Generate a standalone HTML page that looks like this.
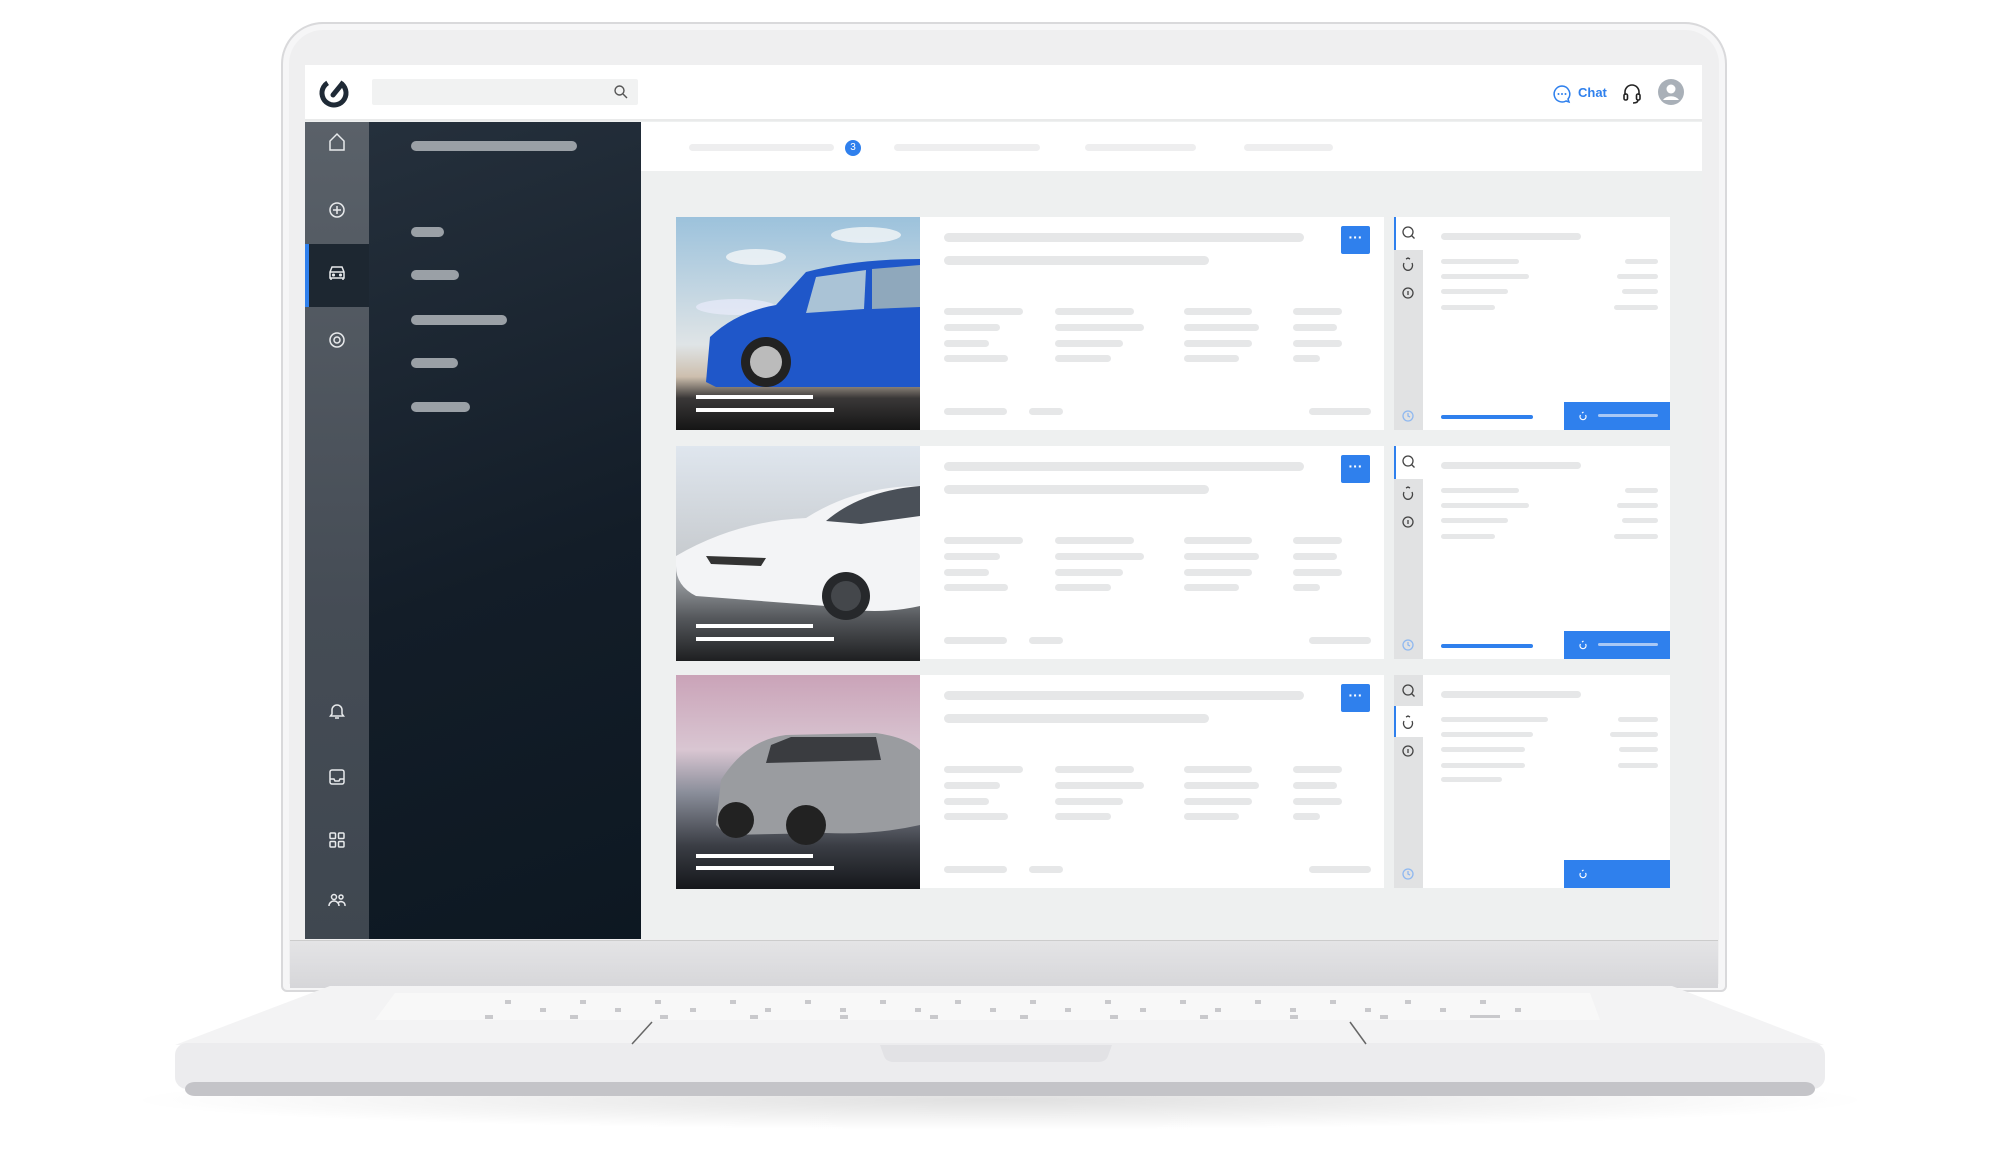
<!DOCTYPE html>
<html><head><meta charset="utf-8"><style>
*{margin:0;padding:0;box-sizing:border-box}
body{width:2000px;height:1152px;background:#fff;position:relative;overflow:hidden;font-family:"Liberation Sans",sans-serif}
.a{position:absolute}
.b{position:absolute;background:#e6e7e8;border-radius:5px;height:7px}
.m{position:absolute;background:#9aa0a6;border-radius:6px;height:10px}
.row{position:absolute;left:676px;width:994px;height:213px}
.mid{position:absolute;left:244px;top:0;width:464px;height:213px;background:#fff}
.strip{position:absolute;left:718px;top:0;width:29px;height:213px;background:#e1e2e3}
.rw{position:absolute;left:747px;top:0;width:247px;height:213px;background:#fff}
.btn{position:absolute;left:665px;top:9px;width:29px;height:28px;background:#2f80ed;border-radius:2px;color:#fff;font-size:14px;text-align:center;line-height:22px;font-weight:bold}
.bb{position:absolute;left:888px;top:185px;width:106px;height:28px;background:#2f80ed}
</style></head><body>
<div class="a" style="left:120px;top:1070px;width:1760px;height:60px;border-radius:50%;background:radial-gradient(ellipse at center,rgba(0,0,0,.12),rgba(0,0,0,0) 70%)"></div>
<div class="a" style="left:281px;top:22px;width:1446px;height:970px;border-radius:42px 42px 6px 6px;background:#efeff0;border:2px solid #d9d9db;box-shadow:inset 0 0 0 6px #f6f6f7"></div>
<div class="a" style="left:290px;top:940px;width:1428px;height:48px;background:linear-gradient(#e4e4e6,#d6d6d9);border-top:1px solid #ccc"></div>
<svg class="a" style="left:0;top:0" width="2000" height="1152">
<polygon points="330,986 1672,986 1824,1045 175,1045" fill="#f3f3f4"/>
<polygon points="395,993 1590,993 1600,1020 375,1020" fill="#f8f8f8"/>
<rect x="175" y="1043" width="1650" height="46" rx="12" fill="#ececee"/>
<rect x="185" y="1082" width="1630" height="14" rx="10" fill="#c4c4c8"/>
<path d="M880 1045 L1112 1045 L1108 1056 Q1106 1062 1098 1062 L894 1062 Q886 1062 884 1056Z" fill="#e2e2e5"/>
<line x1="652" y1="1022" x2="632" y2="1044" stroke="#666" stroke-width="1.5"/>
<line x1="1350" y1="1022" x2="1366" y2="1044" stroke="#666" stroke-width="1.5"/>
<g fill="#c9c9cc">
<rect x="505" y="1000" width="6" height="4"/><rect x="580" y="1000" width="6" height="4"/><rect x="655" y="1000" width="6" height="4"/><rect x="730" y="1000" width="6" height="4"/><rect x="805" y="1000" width="6" height="4"/><rect x="880" y="1000" width="6" height="4"/><rect x="955" y="1000" width="6" height="4"/><rect x="1030" y="1000" width="6" height="4"/><rect x="1105" y="1000" width="6" height="4"/><rect x="1180" y="1000" width="6" height="4"/><rect x="1255" y="1000" width="6" height="4"/><rect x="1330" y="1000" width="6" height="4"/><rect x="1405" y="1000" width="6" height="4"/><rect x="1480" y="1000" width="6" height="4"/>
<rect x="540" y="1008" width="6" height="4"/><rect x="615" y="1008" width="6" height="4"/><rect x="690" y="1008" width="6" height="4"/><rect x="765" y="1008" width="6" height="4"/><rect x="840" y="1008" width="6" height="4"/><rect x="915" y="1008" width="6" height="4"/><rect x="990" y="1008" width="6" height="4"/><rect x="1065" y="1008" width="6" height="4"/><rect x="1140" y="1008" width="6" height="4"/><rect x="1215" y="1008" width="6" height="4"/><rect x="1290" y="1008" width="6" height="4"/><rect x="1365" y="1008" width="6" height="4"/><rect x="1440" y="1008" width="6" height="4"/><rect x="1515" y="1008" width="6" height="4"/>
<rect x="485" y="1015" width="8" height="4"/><rect x="570" y="1015" width="8" height="4"/><rect x="660" y="1015" width="8" height="4"/><rect x="750" y="1015" width="8" height="4"/><rect x="840" y="1015" width="8" height="4"/><rect x="930" y="1015" width="8" height="4"/><rect x="1020" y="1015" width="8" height="4"/><rect x="1110" y="1015" width="8" height="4"/><rect x="1200" y="1015" width="8" height="4"/><rect x="1290" y="1015" width="8" height="4"/><rect x="1380" y="1015" width="8" height="4"/><rect x="1470" y="1015" width="30" height="3"/>
</g>
</svg>
<div class="a" style="left:305px;top:65px;width:1397px;height:874px;background:#eef0f0;overflow:hidden">
 <div class="a" style="left:0;top:0;width:1397px;height:56px;background:#fff;border-bottom:2px solid #e9eaea"></div>
 <svg class="a" style="left:13px;top:12px" width="32" height="32" viewBox="0 0 32 32"><circle cx="16" cy="16" r="12" fill="none" stroke="#1f2a36" stroke-width="5" stroke-dasharray="62 20" transform="rotate(-60 16 16)"/><path d="M15 18 L24 7" stroke="#1f2a36" stroke-width="5" stroke-linecap="round"/></svg>
 <div class="a" style="left:67px;top:14px;width:266px;height:26px;background:#f1f2f2;border-radius:2px"></div>
 <svg class="a" style="left:308px;top:19px" width="16" height="16"><circle cx="6.5" cy="6.5" r="4.5" fill="none" stroke="#555" stroke-width="1.4"/><line x1="10" y1="10" x2="14" y2="14" stroke="#555" stroke-width="1.4"/></svg>
 <svg class="a" style="left:1247px;top:19px" width="20" height="20"><path d="M10 2a8 8 0 1 0 4 15l3 1-1-3A8 8 0 0 0 10 2z" fill="none" stroke="#2f80ed" stroke-width="1.5"/><circle cx="6.5" cy="10" r="1" fill="#2f80ed"/><circle cx="10" cy="10" r="1" fill="#2f80ed"/><circle cx="13.5" cy="10" r="1" fill="#2f80ed"/></svg>
 <div class="a" style="left:1273px;top:20px;font-size:13px;font-weight:bold;color:#2f80ed">Chat</div>
 <svg class="a" style="left:1317px;top:18px" width="20" height="22"><path d="M3 12V9a7 7 0 0 1 14 0v3" fill="none" stroke="#222" stroke-width="1.6"/><rect x="2" y="11" width="3.5" height="6" rx="1.5" fill="none" stroke="#222" stroke-width="1.6"/><rect x="14.5" y="11" width="3.5" height="6" rx="1.5" fill="none" stroke="#222" stroke-width="1.6"/><path d="M16 17q0 3-5 3" fill="none" stroke="#222" stroke-width="1.6"/></svg>
 <svg class="a" style="left:1353px;top:14px" width="26" height="26"><circle cx="13" cy="13" r="13" fill="#a9b0b8"/><circle cx="13" cy="10" r="4.5" fill="#fff"/><path d="M5 21a9 7 0 0 1 16 0" fill="#fff"/></svg>
 <div class="a" style="left:0;top:57px;width:64px;height:817px;background:linear-gradient(#5a6169,#454c55 60%,#3f4750)"></div>
 <div class="a" style="left:0;top:179px;width:64px;height:63px;background:#1d2731;border-left:4px solid #2f80ed"></div>
 <div class="a" style="left:64px;top:57px;width:272px;height:817px;background:linear-gradient(160deg,#25303c,#131d28 55%,#0d1822)"></div>
 <div class="m" style="left:106px;top:76px;width:166px"></div>
 <div class="m" style="left:106px;top:162px;width:33px"></div>
 <div class="m" style="left:106px;top:205px;width:48px"></div>
 <div class="m" style="left:106px;top:250px;width:96px"></div>
 <div class="m" style="left:106px;top:293px;width:47px"></div>
 <div class="m" style="left:106px;top:337px;width:59px"></div>
 <svg class="a" style="left:0;top:0" width="64" height="874" fill="none" stroke="#e8eaec" stroke-width="1.5">
  <path d="M25 85V76l7-7 7 7v9z"/>
  <circle cx="32" cy="145" r="7"/><path d="M32 141v8M28 145h8"/>
  <path d="M25 213v-6l2-5h10l2 5v6zM25 207h14M26 213v2M38 213v2"/><circle cx="28.5" cy="210" r=".8"/><circle cx="35.5" cy="210" r=".8"/>
  <circle cx="32" cy="275" r="7"/><circle cx="32" cy="275" r="3"/>
  <path d="M27 645a5 5 0 0 1 10 0v4l1.5 2h-13l1.5-2zM30 653h4"/>
  <rect x="25" y="705" width="14" height="14" rx="2"/><path d="M25 714h4l1 2h4l1-2h4"/>
  <rect x="25" y="768" width="5.5" height="5.5" rx="1"/><rect x="33.5" y="768" width="5.5" height="5.5" rx="1"/><rect x="25" y="776.5" width="5.5" height="5.5" rx="1"/><rect x="33.5" y="776.5" width="5.5" height="5.5" rx="1"/>
  <circle cx="29" cy="832" r="2.5"/><circle cx="36" cy="832" r="2"/><path d="M24 841a5 5 0 0 1 10 0M33 838a4 4 0 0 1 7 3"/>
 </svg>
 <div class="a" style="left:336px;top:57px;width:1061px;height:49px;background:#fff"></div>
 <div class="b" style="left:384px;top:79px;width:145px;background:#eeeeef"></div>
 <div class="a" style="left:540px;top:75px;width:16px;height:16px;border-radius:50%;background:#2f80ed;color:#fff;font-size:10px;text-align:center;line-height:16px">3</div>
 <div class="b" style="left:589px;top:79px;width:146px;background:#eeeeef"></div>
 <div class="b" style="left:780px;top:79px;width:111px;background:#eeeeef"></div>
 <div class="b" style="left:939px;top:79px;width:89px;background:#eeeeef"></div>
</div>

<div class="row" style="top:217px">
 <svg class="a" width="244" height="213"><defs><linearGradient id="s1" x1="0" y1="0" x2="0" y2="1"><stop offset="0" stop-color="#9cc2dc"/><stop offset=".6" stop-color="#dfe4e6"/><stop offset=".75" stop-color="#cdbfae"/><stop offset=".85" stop-color="#3a3838"/><stop offset="1" stop-color="#151515"/></linearGradient></defs>
 <rect width="244" height="213" fill="url(#s1)"/>
 <ellipse cx="80" cy="40" rx="30" ry="8" fill="#f4f6f8" opacity=".8"/><ellipse cx="190" cy="18" rx="35" ry="8" fill="#f4f6f8" opacity=".8"/><ellipse cx="60" cy="90" rx="40" ry="8" fill="#eef" opacity=".6"/>
 <path d="M30 165 L34 120 Q60 95 100 88 L130 55 Q180 42 244 42 L244 170 L40 170Z" fill="#1f57c9"/>
 <path d="M140 60 L190 53 L188 92 L130 96Z" fill="#aac3d6"/><path d="M196 52 L244 48 L244 90 L196 92Z" fill="#8fa8bc"/>
 <circle cx="90" cy="145" r="25" fill="#222"/><circle cx="90" cy="145" r="16" fill="#bbb"/>
 <rect x="20" y="178" width="117" height="4" fill="#fff"/><rect x="20" y="191" width="138" height="4" fill="#fff"/></svg>
 <div class="mid"></div>
 <div class="b" style="left:268px;top:16px;width:360px;height:9px"></div>
 <div class="b" style="left:268px;top:39px;width:265px;height:9px"></div>
 <div class="btn">···</div>
 <div class="b" style="left:268px;top:91px;width:79px"></div><div class="b" style="left:379px;top:91px;width:79px"></div><div class="b" style="left:508px;top:91px;width:68px"></div><div class="b" style="left:617px;top:91px;width:49px"></div>
 <div class="b" style="left:268px;top:107px;width:56px"></div><div class="b" style="left:379px;top:107px;width:89px"></div><div class="b" style="left:508px;top:107px;width:75px"></div><div class="b" style="left:617px;top:107px;width:44px"></div>
 <div class="b" style="left:268px;top:123px;width:45px"></div><div class="b" style="left:379px;top:123px;width:68px"></div><div class="b" style="left:508px;top:123px;width:68px"></div><div class="b" style="left:617px;top:123px;width:49px"></div>
 <div class="b" style="left:268px;top:138px;width:64px"></div><div class="b" style="left:379px;top:138px;width:56px"></div><div class="b" style="left:508px;top:138px;width:55px"></div><div class="b" style="left:617px;top:138px;width:27px"></div>
 <div class="b" style="left:268px;top:191px;width:63px"></div><div class="b" style="left:353px;top:191px;width:34px"></div><div class="b" style="left:633px;top:191px;width:62px"></div>
 <div class="strip"></div><div class="a" style="left:718px;top:0;width:29px;height:33px;background:#fff;border-left:2px solid #2f80ed"></div>
 <div class="rw"></div>
 <svg class="a" style="left:718px;top:0" width="29" height="213" fill="none" stroke="#444" stroke-width="1.3"><circle cx="14" cy="15" r="5"/><path d="M17.5 18.5l3 3"/><path d="M10 46a4.5 5 0 1 0 8 0M12 42l2-1 2 1"/><circle cx="14" cy="76" r="5"/><path d="M14 74v4"/><circle cx="14" cy="199" r="5" stroke="#8fb8f0"/><path d="M14 196v3l2 1" stroke="#8fb8f0"/></svg>
 <div class="b" style="left:765px;top:16px;width:140px"></div>
 <div class="b" style="left:765px;top:42px;width:78px;height:5px"></div><div class="b" style="left:949px;top:42px;width:33px;height:5px"></div>
 <div class="b" style="left:765px;top:57px;width:88px;height:5px"></div><div class="b" style="left:941px;top:57px;width:41px;height:5px"></div>
 <div class="b" style="left:765px;top:72px;width:67px;height:5px"></div><div class="b" style="left:946px;top:72px;width:36px;height:5px"></div>
 <div class="b" style="left:765px;top:88px;width:54px;height:5px"></div><div class="b" style="left:938px;top:88px;width:44px;height:5px"></div>
 <div class="a" style="left:765px;top:198px;width:92px;height:4px;background:#2f80ed;border-radius:2px"></div>
 <div class="bb"><svg class="a" style="left:14px;top:9px" width="10" height="10"><path d="M2.5 4a3 3 0 1 0 5 0M4 2l1.5-1" stroke="#fff" fill="none" stroke-width="1.2"/></svg><div class="a" style="left:34px;top:12px;width:60px;height:3px;background:#a9c8f5;border-radius:2px"></div></div>
</div>

<div class="row" style="top:446px">
 <svg class="a" width="244" height="215"><defs><linearGradient id="s2" x1="0" y1="0" x2="0" y2="1"><stop offset="0" stop-color="#dfe6ee"/><stop offset=".5" stop-color="#c8ccd0"/><stop offset=".8" stop-color="#55585c"/><stop offset="1" stop-color="#1e1f21"/></linearGradient></defs>
 <rect width="244" height="215" fill="url(#s2)"/>
 <path d="M0 110 Q60 75 130 72 Q180 40 244 40 L244 160 Q200 170 150 160 L20 150 Q0 140 0 120Z" fill="#f3f4f6"/>
 <path d="M150 75 Q185 45 244 40 L244 70 L185 78Z" fill="#4a5058"/>
 <path d="M30 110 L90 112 L85 120 L35 118Z" fill="#333"/>
 <circle cx="170" cy="150" r="24" fill="#26282b"/><circle cx="170" cy="150" r="15" fill="#44474b"/>
 <rect x="20" y="178" width="117" height="4" fill="#fff"/><rect x="20" y="191" width="138" height="4" fill="#fff"/></svg>
 <div class="mid"></div>
 <div class="b" style="left:268px;top:16px;width:360px;height:9px"></div>
 <div class="b" style="left:268px;top:39px;width:265px;height:9px"></div>
 <div class="btn">···</div>
 <div class="b" style="left:268px;top:91px;width:79px"></div><div class="b" style="left:379px;top:91px;width:79px"></div><div class="b" style="left:508px;top:91px;width:68px"></div><div class="b" style="left:617px;top:91px;width:49px"></div>
 <div class="b" style="left:268px;top:107px;width:56px"></div><div class="b" style="left:379px;top:107px;width:89px"></div><div class="b" style="left:508px;top:107px;width:75px"></div><div class="b" style="left:617px;top:107px;width:44px"></div>
 <div class="b" style="left:268px;top:123px;width:45px"></div><div class="b" style="left:379px;top:123px;width:68px"></div><div class="b" style="left:508px;top:123px;width:68px"></div><div class="b" style="left:617px;top:123px;width:49px"></div>
 <div class="b" style="left:268px;top:138px;width:64px"></div><div class="b" style="left:379px;top:138px;width:56px"></div><div class="b" style="left:508px;top:138px;width:55px"></div><div class="b" style="left:617px;top:138px;width:27px"></div>
 <div class="b" style="left:268px;top:191px;width:63px"></div><div class="b" style="left:353px;top:191px;width:34px"></div><div class="b" style="left:633px;top:191px;width:62px"></div>
 <div class="strip"></div><div class="a" style="left:718px;top:0;width:29px;height:33px;background:#fff;border-left:2px solid #2f80ed"></div>
 <div class="rw"></div>
 <svg class="a" style="left:718px;top:0" width="29" height="213" fill="none" stroke="#444" stroke-width="1.3"><circle cx="14" cy="15" r="5"/><path d="M17.5 18.5l3 3"/><path d="M10 46a4.5 5 0 1 0 8 0M12 42l2-1 2 1"/><circle cx="14" cy="76" r="5"/><path d="M14 74v4"/><circle cx="14" cy="199" r="5" stroke="#8fb8f0"/><path d="M14 196v3l2 1" stroke="#8fb8f0"/></svg>
 <div class="b" style="left:765px;top:16px;width:140px"></div>
 <div class="b" style="left:765px;top:42px;width:78px;height:5px"></div><div class="b" style="left:949px;top:42px;width:33px;height:5px"></div>
 <div class="b" style="left:765px;top:57px;width:88px;height:5px"></div><div class="b" style="left:941px;top:57px;width:41px;height:5px"></div>
 <div class="b" style="left:765px;top:72px;width:67px;height:5px"></div><div class="b" style="left:946px;top:72px;width:36px;height:5px"></div>
 <div class="b" style="left:765px;top:88px;width:54px;height:5px"></div><div class="b" style="left:938px;top:88px;width:44px;height:5px"></div>
 <div class="a" style="left:765px;top:198px;width:92px;height:4px;background:#2f80ed;border-radius:2px"></div>
 <div class="bb"><svg class="a" style="left:14px;top:9px" width="10" height="10"><path d="M2.5 4a3 3 0 1 0 5 0M4 2l1.5-1" stroke="#fff" fill="none" stroke-width="1.2"/></svg><div class="a" style="left:34px;top:12px;width:60px;height:3px;background:#a9c8f5;border-radius:2px"></div></div>
</div>

<div class="row" style="top:675px">
 <svg class="a" width="244" height="214"><defs><linearGradient id="s3" x1="0" y1="0" x2="0" y2="1"><stop offset="0" stop-color="#caa3b8"/><stop offset=".35" stop-color="#d9c6d2"/><stop offset=".55" stop-color="#8a8e9a"/><stop offset=".8" stop-color="#3a3d44"/><stop offset="1" stop-color="#15171b"/></linearGradient></defs>
 <rect width="244" height="214" fill="url(#s3)"/>
 <path d="M40 150 L45 105 Q70 65 110 60 L200 58 Q230 62 244 75 L244 150 Q200 160 150 158 L50 160Z" fill="#9a9ca0"/>
 <path d="M95 70 L115 62 L200 62 L205 85 L90 88Z" fill="#3a3c40"/>
 <circle cx="60" cy="145" r="18" fill="#222"/><circle cx="130" cy="150" r="20" fill="#222"/>
 <rect x="20" y="179" width="117" height="4" fill="#fff"/><rect x="20" y="191" width="138" height="4" fill="#fff"/></svg>
 <div class="mid"></div>
 <div class="b" style="left:268px;top:16px;width:360px;height:9px"></div>
 <div class="b" style="left:268px;top:39px;width:265px;height:9px"></div>
 <div class="btn">···</div>
 <div class="b" style="left:268px;top:91px;width:79px"></div><div class="b" style="left:379px;top:91px;width:79px"></div><div class="b" style="left:508px;top:91px;width:68px"></div><div class="b" style="left:617px;top:91px;width:49px"></div>
 <div class="b" style="left:268px;top:107px;width:56px"></div><div class="b" style="left:379px;top:107px;width:89px"></div><div class="b" style="left:508px;top:107px;width:75px"></div><div class="b" style="left:617px;top:107px;width:44px"></div>
 <div class="b" style="left:268px;top:123px;width:45px"></div><div class="b" style="left:379px;top:123px;width:68px"></div><div class="b" style="left:508px;top:123px;width:68px"></div><div class="b" style="left:617px;top:123px;width:49px"></div>
 <div class="b" style="left:268px;top:138px;width:64px"></div><div class="b" style="left:379px;top:138px;width:56px"></div><div class="b" style="left:508px;top:138px;width:55px"></div><div class="b" style="left:617px;top:138px;width:27px"></div>
 <div class="b" style="left:268px;top:191px;width:63px"></div><div class="b" style="left:353px;top:191px;width:34px"></div><div class="b" style="left:633px;top:191px;width:62px"></div>
 <div class="strip"></div><div class="a" style="left:718px;top:31px;width:29px;height:31px;background:#fff;border-left:2px solid #2f80ed"></div>
 <div class="rw"></div>
 <svg class="a" style="left:718px;top:0" width="29" height="213" fill="none" stroke="#444" stroke-width="1.3"><circle cx="14" cy="15" r="5"/><path d="M17.5 18.5l3 3"/><path d="M10 46a4.5 5 0 1 0 8 0M12 42l2-1 2 1"/><circle cx="14" cy="76" r="5"/><path d="M14 74v4"/><circle cx="14" cy="199" r="5" stroke="#8fb8f0"/><path d="M14 196v3l2 1" stroke="#8fb8f0"/></svg>
 <div class="b" style="left:765px;top:16px;width:140px"></div>
 <div class="b" style="left:765px;top:42px;width:107px;height:5px"></div><div class="b" style="left:942px;top:42px;width:40px;height:5px"></div>
 <div class="b" style="left:765px;top:57px;width:92px;height:5px"></div><div class="b" style="left:934px;top:57px;width:48px;height:5px"></div>
 <div class="b" style="left:765px;top:72px;width:84px;height:5px"></div><div class="b" style="left:943px;top:72px;width:39px;height:5px"></div>
 <div class="b" style="left:765px;top:88px;width:84px;height:5px"></div><div class="b" style="left:942px;top:88px;width:40px;height:5px"></div>
 <div class="b" style="left:765px;top:102px;width:61px;height:5px"></div>
 <div class="bb"><svg class="a" style="left:14px;top:9px" width="10" height="10"><path d="M2.5 4a3 3 0 1 0 5 0M4 2l1.5-1" stroke="#fff" fill="none" stroke-width="1.2"/></svg></div>
</div>
</body></html>
